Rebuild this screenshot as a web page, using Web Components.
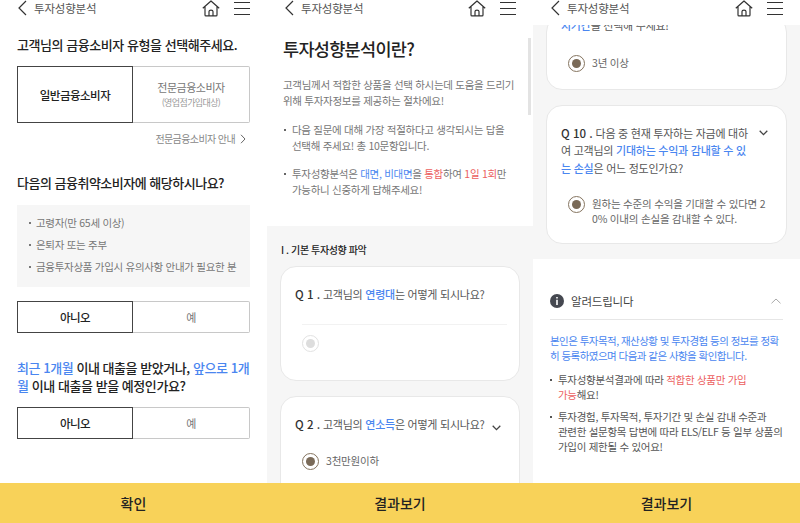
<!DOCTYPE html>
<html lang="ko">
<head>
<meta charset="utf-8">
<title>투자성향분석</title>
<style>
  html, body {
    background: #ffffff;
    color: #222222;
    font-family: "Noto Sans CJK KR", "Noto Sans", sans-serif;
    height: 523px;
    margin: 0;
    overflow: hidden;
  }

  main {
    display: grid;
    grid-template-columns: 267px 266px 267px;
    height: 523px;
  }

  b.blue { color: #4a86f0; font-weight: 500; }
</style>
</head>
<body>
<main>
  <phone-screen action="확인">
    <type-pick></type-pick>
    <vuln-check></vuln-check>
  </phone-screen>

  <phone-screen action="결과보기" bar>
    <intro-block></intro-block>
    <gray-block>
      <div slot="label">I . 기본 투자성향 파악</div>
      <question-card no="Q 1" height="115" divider>
        고객님의 <b class="blue">연령대</b>는 어떻게 되시나요?
      </question-card>
      <question-card no="Q 2" height="116" chevron answer="3천만원이하" gap="19">
        고객님의 <b class="blue">연소득</b>은 어떻게 되시나요?
      </question-card>
    </gray-block>
  </phone-screen>

  <phone-screen action="결과보기" shift="-9">
    <gray-block tail>
      <question-card clipped answer="3년 이상" gap="20">
        <b class="blue">시기간</b>을 선택해 주세요!
      </question-card>
      <question-card no="Q 10" chevron answer="원하는 수준의 수익을 기대할 수 있다면 20% 이내의 손실을 감내할 수 있다." gap="19">
        다음 중 현재 투자하는 자금에 대하여 고객님의 <b class="blue">기대하는 수익과 감내할 수 있는 손실</b>은 어느 정도인가요?
      </question-card>
    </gray-block>
    <notice-block></notice-block>
  </phone-screen>
</main>

<script>
class TopBar extends HTMLElement {
  constructor() {
    super();
    this.attachShadow( {mode: 'open'} );
    this.shadowRoot.innerHTML = /* template */ `
      <style>
        :host {
          align-items: center;
          background: #ffffff;
          box-sizing: border-box;
          display: flex;
          flex: 0 0 25px;
          height: 25px;
          padding: 0 17px 9px 18px;
          position: relative;
          z-index: 2;
        }

        span {
          color: #555555;
          font-size: 11.5px;
          letter-spacing: -0.2px;
          margin-left: 7px;
        }

        svg { display: block; flex: none; }
        .home { margin-left: auto; margin-right: 14px; }
      </style>
      <svg width="9" height="16" viewBox="0 0 9 16">
        <path fill="none" stroke="#333" stroke-width="1.2" d="M8 1 1 8l7 7"/>
      </svg>
      <span>투자성향분석</span>
      <svg class="home" width="18" height="17" viewBox="0 0 18 17">
        <path fill="none" stroke="#333" stroke-width="1.2" stroke-linejoin="round" d="M.8 8.300 9 1l8.200 7.300M3 6.500V15c0 .6.3.9.9.9h10.200c.6 0 .9-.3.9-.9V6.500M7 15.800V11.500c0-.9.6-1.300 2-1.300s2 .4 2 1.300v4.300"/>
      </svg>
      <svg width="16" height="15" viewBox="0 0 16 15">
        <path stroke="#333" stroke-width="1.2" d="M0 1.500h16M0 7.500h16M0 13.500h16"/>
      </svg>
    `;
  }
}

class PhoneScreen extends HTMLElement {
  constructor() {
    super();
    this.attachShadow( {mode: 'open'} );
    const shift = this.getAttribute( 'shift' ) || 0;
    const bar = this.hasAttribute( 'bar' ) ? '<i></i>' : '';
    this.shadowRoot.innerHTML = /* template */ `
      <style>
        :host {
          display: flex;
          flex-direction: column;
          height: 523px;
          overflow: hidden;
          position: relative;
        }

        section {
          flex: 1;
          min-height: 0;
          overflow: hidden;
        }

        div { margin-top: ${shift}px; }

        i {
          background: #e3e3e3;
          height: 77px;
          position: absolute;
          right: 2px;
          top: 38px;
          width: 3px;
        }

        footer {
          align-items: center;
          background: #f8d259;
          color: #222222;
          display: flex;
          flex: 0 0 40px;
          font-size: 14px;
          font-weight: 500;
          justify-content: center;
          position: relative;
          z-index: 2;
        }
      </style>
      <top-bar></top-bar>
      <section><div><slot></slot></div></section>
      ${bar}
      <footer>${this.getAttribute( 'action' )}</footer>
    `;
  }
}

class SegmentPick extends HTMLElement {
  constructor() {
    super();
    this.attachShadow( {mode: 'open'} );
    this.shadowRoot.innerHTML = /* template */ `
      <style>
        :host {
          display: grid;
          grid-template-columns: 116px 117px;
          height: ${this.getAttribute( 'height' ) || 32}px;
        }

        button {
          appearance: none;
          background: #ffffff;
          border: solid 1px #c8c8c8;
          border-left: none;
          border-radius: 0 2px 2px 0;
          color: #777777;
          font: inherit;
          font-size: 11px;
          letter-spacing: -0.5px;
          margin: 0;
          padding: 0;
        }

        button:first-of-type {
          border: solid 1.5px #444444;
          border-radius: 0;
          color: #222222;
          font-size: 11.5px;
          font-weight: 500;
        }
      </style>
      <button>${this.getAttribute( 'on' )}</button>
      <button><slot></slot></button>
    `;
  }
}

class TypePick extends HTMLElement {
  constructor() {
    super();
    this.attachShadow( {mode: 'open'} );
    this.shadowRoot.innerHTML = /* template */ `
      <style>
        :host {
          display: block;
          padding: 10px 17px 0;
        }

        h2 {
          color: #222222;
          font-size: 13px;
          font-weight: 500;
          letter-spacing: -0.45px;
          line-height: 20px;
          margin: 0 0 11px;
        }

        span {
          display: block;
          line-height: 16px;
        }

        small {
          color: #999999;
          display: block;
          font-size: 9px;
          letter-spacing: -0.6px;
          line-height: 16px;
        }

        p {
          align-items: center;
          color: #888888;
          display: flex;
          font-size: 10px;
          gap: 5px;
          justify-content: flex-end;
          letter-spacing: -0.6px;
          line-height: 16px;
          margin: 8px 4px 0 0;
        }
      </style>
      <h2>고객님의 금융소비자 유형을 선택해주세요.</h2>
      <segment-pick on="일반금융소비자" height="57"><span>전문금융소비자</span><small>(영업점가입대상)</small></segment-pick>
      <p>전문금융소비자 안내
        <svg width="6" height="10" viewBox="0 0 6 10"><path fill="none" stroke="#666" d="m1 .8 4 4.200-4 4.200"/></svg>
      </p>
    `;
  }
}

class VulnCheck extends HTMLElement {
  constructor() {
    super();
    this.attachShadow( {mode: 'open'} );
    this.shadowRoot.innerHTML = /* template */ `
      <style>
        :host {
          display: block;
          padding: 26px 17px 0;
        }

        h2 {
          color: #222222;
          font-size: 13px;
          font-weight: 500;
          letter-spacing: -0.5px;
          line-height: 20px;
          margin: 0;
        }

        h2.ask {
          letter-spacing: -0.45px;
          line-height: 18px;
          margin: 26px 0 12px;
          word-break: break-all;
        }

        em { color: #4a86f0; font-style: normal; }

        ul {
          background: #f6f6f6;
          color: #777777;
          font-size: 10.500px;
          letter-spacing: -0.3px;
          line-height: 22px;
          list-style: none;
          margin: 12px 0 14px;
          padding: 7px 12px 9px 19px;
        }

        li { position: relative; }

        li::before {
          background: #777777;
          content: "";
          height: 2px;
          left: -7px;
          position: absolute;
          top: 10px;
          width: 2px;
        }
      </style>
      <h2>다음의 금융취약소비자에 해당하시나요?</h2>
      <ul>
        <li>고령자(만 65세 이상)</li>
        <li>은퇴자 또는 주부</li>
        <li>금융투자상품 가입시 유의사항 안내가 필요한 분</li>
      </ul>
      <segment-pick on="아니오">예</segment-pick>
      <h2 class="ask"><em>최근 1개월</em> 이내 대출을 받았거나, <em>앞으로 1개월</em> 이내 대출을 받을 예정인가요?</h2>
      <segment-pick on="아니오">예</segment-pick>
    `;
  }
}

class IntroBlock extends HTMLElement {
  constructor() {
    super();
    this.attachShadow( {mode: 'open'} );
    this.shadowRoot.innerHTML = /* template */ `
      <style>
        :host {
          box-sizing: border-box;
          color: #777777;
          display: block;
          font-size: 10.500px;
          height: 201px;
          letter-spacing: -0.3px;
          line-height: 16px;
          padding: 10px 17px 0 16px;
        }

        h1 {
          color: #222222;
          font-size: 17.500px;
          font-weight: 500;
          letter-spacing: -0.7px;
          line-height: 28px;
          margin: 0 0 14px;
        }

        p { margin: 0 0 13px; }
        ul { list-style: none; margin: 0; padding: 0 0 0 9px; }
        li { margin-bottom: 12px; position: relative; }

        li::before {
          background: #666666;
          content: "";
          height: 2px;
          left: -8px;
          position: absolute;
          top: 7px;
          width: 2px;
        }

        em { color: #4a86f0; font-style: normal; }
        strong { color: #ec5f5f; font-weight: 400; }
      </style>
      <h1>투자성향분석이란?</h1>
      <p>고객님께서 적합한 상품을 선택 하시는데 도움을 드리기 위해 투자자정보를 제공하는 절차에요!</p>
      <ul>
        <li>다음 질문에 대해 가장 적절하다고 생각되시는 답을 선택해 주세요! 총 10문항입니다.</li>
        <li>투자성향분석은 <em>대면, 비대면</em>을 <strong>통합</strong>하여 <strong>1일 1회</strong>만 가능하니 신중하게 답해주세요!</li>
      </ul>
    `;
  }
}

class GrayBlock extends HTMLElement {
  constructor() {
    super();
    this.attachShadow( {mode: 'open'} );
    this.shadowRoot.innerHTML = /* template */ `
      <style>
        :host {
          background: #f6f6f6;
          display: flex;
          flex-direction: column;
          gap: 15px;
          padding: ${this.hasAttribute( 'tail' ) ? '0 13px 15px' : '16px 13px 0'};
        }

        ::slotted([slot="label"]) {
          color: #222222;
          font-size: 10px;
          font-weight: 500;
          letter-spacing: -0.4px;
          line-height: 16px;
          margin-bottom: -7px;
          margin-left: 1px;
        }
      </style>
      <slot name="label"></slot>
      <slot></slot>
    `;
  }
}

class QuestionCard extends HTMLElement {
  constructor() {
    super();
    this.attachShadow( {mode: 'open'} );
    const height = this.getAttribute( 'height' );
    const no = this.getAttribute( 'no' );
    const answer = this.getAttribute( 'answer' );
    const clipped = this.hasAttribute( 'clipped' );
    const divider = this.hasAttribute( 'divider' );
    const chevron = this.hasAttribute( 'chevron' );
    this.shadowRoot.innerHTML = /* template */ `
      <style>
        :host {
          background: #ffffff;
          border: solid 1px #e8e8e8;
          border-radius: 16px;
          box-sizing: border-box;
          display: block;
          height: ${height ? height + 'px' : 'auto'};
          padding: ${clipped ? '0' : '19px'} 14px 17px;
        }

        header {
          color: #555555;
          display: flex;
          font-size: 11px;
          letter-spacing: -0.25px;
          line-height: 17.500px;
          padding-right: ${chevron ? '0' : '14px'};
        }

        header > div { flex: 1; word-break: break-all; }
        strong { color: #333333; font-size: 11.500px; font-weight: 500; letter-spacing: 0; }

        svg.chev {
          flex: none;
          margin: ${no === 'Q 10' ? '5px 4px 0 4px' : '9px 4px 0 4px'};
        }

        hr {
          border: none;
          border-top: solid 1px #f2f2f2;
          margin: 20px 0 0 7px;
          width: 205px;
        }

        .answer {
          color: #666666;
          display: flex;
          font-size: 10.500px;
          gap: 7px;
          letter-spacing: -0.2px;
          line-height: 15px;
          margin: ${this.getAttribute( 'gap' ) || 10}px 0 0 7px;
          word-break: break-all;
        }

        .dot {
          align-items: center;
          border: solid 1.5px #85745f;
          border-radius: 50%;
          box-sizing: border-box;
          display: flex;
          flex: none;
          height: 17px;
          justify-content: center;
          width: 17px;
        }

        .dot::after {
          background: #7a6a58;
          border-radius: 50%;
          content: "";
          height: 9px;
          width: 9px;
        }

        .dot.off { border-color: #e2e2e2; margin: 10px 0 0 7px; }
        .dot.off::after { background: #dddddd; }
      </style>
      <header>
        <div>${no ? `<strong>${no} .</strong> ` : ''}<slot></slot></div>
        ${chevron ? '<svg class="chev" width="9" height="6" viewBox="0 0 9 6"><path fill="none" stroke="#444" stroke-width="1.3" d="m.7.8 3.800 3.800L8.300.8"/></svg>' : ''}
      </header>
      ${divider ? '<hr><div class="dot off"></div>' : ''}
      ${answer ? `<div class="answer"><span class="dot"></span><span>${answer}</span></div>` : ''}
    `;
  }
}

class NoticeBlock extends HTMLElement {
  constructor() {
    super();
    this.attachShadow( {mode: 'open'} );
    this.shadowRoot.innerHTML = /* template */ `
      <style>
        :host {
          background: #ffffff;
          color: #555555;
          display: block;
          font-size: 10.500px;
          letter-spacing: -0.3px;
          line-height: 15px;
          padding: 33px 17px 0;
        }

        header {
          align-items: center;
          border-bottom: solid 1px #e6e6e6;
          color: #444444;
          display: flex;
          font-size: 11.500px;
          gap: 7px;
          height: 18px;
          letter-spacing: -0.2px;
          padding-bottom: 9px;
        }

        header svg { flex: none; }
        header svg:last-child { margin-left: auto; margin-right: 2px; }
        p { color: #4a86f0; letter-spacing: -0.55px; margin: 13px 0 9px; word-break: break-all; }
        ul { list-style: none; margin: 0; padding: 0 0 0 8px; }
        li { margin-bottom: 7px; position: relative; word-break: keep-all; }

        li::before {
          background: #555555;
          content: "";
          height: 2px;
          left: -8px;
          position: absolute;
          top: 7px;
          width: 2px;
        }

        strong { color: #ec5f5f; font-weight: 400; }
      </style>
      <header>
        <svg width="14" height="14" viewBox="0 0 14 14">
          <circle cx="7" cy="7" r="7" fill="#454850"/>
          <path fill="#fff" d="M6.200 3h1.600v1.600H6.200zM6.200 5.800h1.600V11H6.200z"/>
        </svg>
        알려드립니다
        <svg width="10" height="6" viewBox="0 0 10 6"><path fill="none" stroke="#aaa" d="M.5 5.300 5 1l4.500 4.300"/></svg>
      </header>
      <p>본인은 투자목적, 재산상황 및 투자경험 등의 정보를 정확히 등록하였으며 다음과 같은 사항을 확인합니다.</p>
      <ul>
        <li>투자성향분석결과에 따라 <strong>적합한 상품만 가입 가능</strong>해요!</li>
        <li>투자경험, 투자목적, 투자기간 및 손실 감내 수준과 관련한 설문항목 답변에 따라 ELS/ELF 등 일부 상품의 가입이 제한될 수 있어요!</li>
      </ul>
    `;
  }
}

window.customElements.define( 'top-bar', TopBar );
window.customElements.define( 'phone-screen', PhoneScreen );
window.customElements.define( 'segment-pick', SegmentPick );
window.customElements.define( 'type-pick', TypePick );
window.customElements.define( 'vuln-check', VulnCheck );
window.customElements.define( 'intro-block', IntroBlock );
window.customElements.define( 'gray-block', GrayBlock );
window.customElements.define( 'question-card', QuestionCard );
window.customElements.define( 'notice-block', NoticeBlock );
</script>
</body>
</html>
